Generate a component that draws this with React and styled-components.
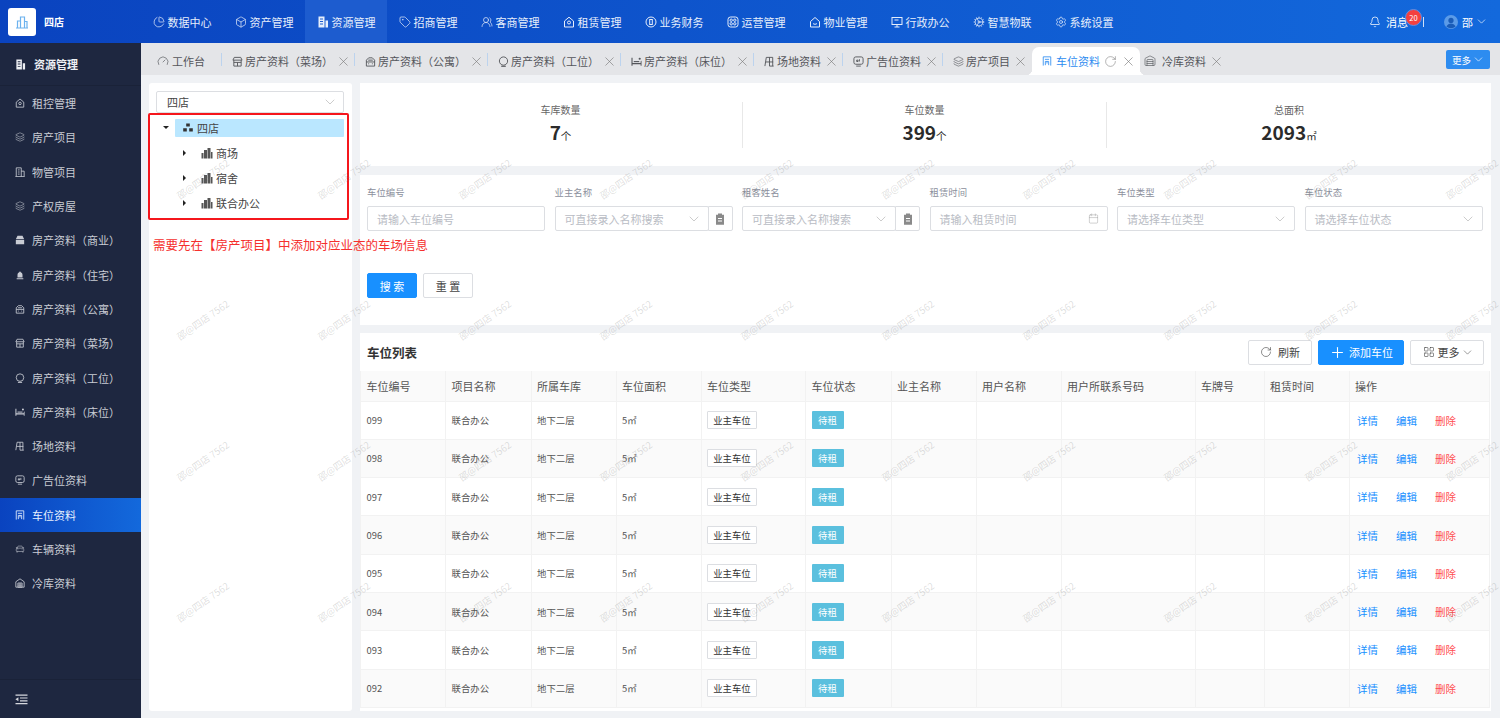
import React from 'react';
import styled, { createGlobalStyle, css } from 'styled-components';
import {
  Bell, Box, Calendar, CarFront, ChevronDown, Cog, Gauge, Layers, LayoutGrid, PieChart, Plus,
  RotateCw, Settings, Tag, UsersRound, Warehouse, X,
} from 'lucide-react';

const GlobalStyle = createGlobalStyle`
  html, body {
    margin: 0;
    height: 100%;
    overflow: hidden;
    font-family: "Noto Sans CJK SC", "Liberation Sans", sans-serif;
    background: #f0f2f5;
  }
  * { box-sizing: border-box; }
`;

const Page = styled.div`
  position: relative;
  display: flex;
  flex-direction: column;
  width: 1500px;
  height: 718px;
  overflow: hidden;
`;

/* top bar */
const TopBar = styled.header`
  display: flex;
  align-items: stretch;
  height: 43px;
  flex: none;
  color: #fff;
  background: linear-gradient(90deg, #0a43bf 0%, #1369dc 100%);
`;

const Brand = styled.div`
  display: flex;
  align-items: center;
  gap: 8px;
  width: 141px;
  padding-left: 8px;
  font-size: 10px;
  font-weight: 700;
`;

const LogoBox = styled.div`
  display: flex;
  align-items: center;
  justify-content: center;
  width: 28px;
  height: 28px;
  border-radius: 3px;
  background: #fff;
  color: #6cb2ee;
`;

const Nav = styled.nav`
  display: flex;
`;

const NavItem = styled.div`
  display: flex;
  align-items: center;
  justify-content: center;
  gap: 3px;
  width: 82px;
  font-size: 11px;
  color: #e6eefb;
  background: ${(p) => (p.$active ? '#1d5ccf' : 'transparent')};
`;

const TopRight = styled.div`
  display: flex;
  align-items: center;
  margin-left: auto;
  padding-right: 14px;
  font-size: 11px;
`;

const Message = styled.div`
  position: relative;
  display: flex;
  align-items: center;
  gap: 5px;
  padding-right: 15px;
  margin-right: 20px;
  border-right: 1px solid #cfe0f8;
  height: 10px;
`;

const Badge = styled.span`
  position: absolute;
  top: -8px;
  right: 1px;
  width: 17px;
  height: 17px;
  border-radius: 50%;
  background: #f4403f;
  border: 1px solid #5d8fe6;
  font-size: 7.5px;
  line-height: 15px;
  text-align: center;
  color: #fff;
`;

const User = styled.div`
  display: flex;
  align-items: center;
  gap: 4px;
`;

const Avatar = styled.svg`
  width: 14px;
  height: 14px;
`;

const SmallArrow = styled(ChevronDown)`
  flex: none;
  margin: 0 -2px;
`;

/* body */
const Body = styled.div`
  display: flex;
  flex: 1;
  min-height: 0;
`;

const Sidebar = styled.aside`
  display: flex;
  flex-direction: column;
  width: 141px;
  flex: none;
  background: #1e2740;
  color: #c9ccd4;
`;

const SideTitle = styled.div`
  display: flex;
  align-items: center;
  gap: 8px;
  height: 43px;
  padding-left: 15px;
  border-bottom: 1px solid #1a2238;
  font-size: 11px;
  font-weight: 700;
  color: #eef0f4;
`;

const SideMenu = styled.div`
  flex: 1;
`;

const SideItem = styled.div`
  display: flex;
  align-items: center;
  gap: 7px;
  height: 34.3px;
  padding-left: 15px;
  font-size: 11px;
  white-space: nowrap;
  color: ${(p) => (p.$active ? '#e8f0fd' : '#c9ccd4')};
  background: ${(p) => (p.$active ? 'linear-gradient(90deg, #0a43bf 0%, #1369dc 100%)' : 'transparent')};
`;

const SideFoot = styled.div`
  display: flex;
  align-items: center;
  height: 39px;
  padding-left: 15px;
  border-top: 1px solid #1a2238;
`;

const Main = styled.main`
  display: flex;
  flex-direction: column;
  flex: 1;
  min-width: 0;
`;

const TabBar = styled.div`
  position: relative;
  display: flex;
  align-items: flex-end;
  height: 32px;
  flex: none;
  background: #e4e5e8;
  font-size: 11px;
  color: #54565b;
`;

const tabPads = {
  first: '0 17px 0 16px',
  normal: '0 7px 0 10px',
  tight: '0 7px 0 4px',
};

const flare = css`
  content: '';
  position: absolute;
  bottom: 0;
  width: 6px;
  height: 6px;
`;

const Tab = styled.div`
  position: relative;
  display: flex;
  align-items: center;
  height: 28px;
  padding: ${(p) => tabPads[p.$pad || 'normal']};
  white-space: nowrap;
  color: ${(p) => (p.$active ? '#2d8cf0' : '#54565b')};
  background: ${(p) => (p.$active ? '#fff' : 'transparent')};
  border-radius: ${(p) => (p.$active ? '7px 7px 0 0' : '0')};
  ${(p) => p.$sep && css`
    &::after {
      content: '';
      position: absolute;
      right: 0;
      top: 6px;
      height: 13px;
      width: 1px;
      background: #bcd3ee;
    }
  `}
  ${(p) => p.$active && css`
    &::before {
      ${flare}
      left: -6px;
      background: radial-gradient(circle at 0 0, transparent 6px, #fff 6.5px);
    }
    &::after {
      ${flare}
      right: -6px;
      background: radial-gradient(circle at 100% 0, transparent 6px, #fff 6.5px);
    }
  `}
`;

const TabLabel = styled.span`
  margin: 0 ${(p) => p.$mr ?? 5}px 0 ${(p) => p.$ml ?? 2}px;
`;

/* lucide's X only fills half of its box, so the box is larger than its slot */
const CloseIcon = styled(X)`
  flex: none;
  margin: 0 -2.5px 0 ${(p) => (p.$ml || 0) - 2.5}px;
  color: #777;
`;

const ReloadIcon = styled(RotateCw)`
  flex: none;
  margin: 0 -1.5px;
  color: #777;
`;

const MoreTab = styled.div`
  position: absolute;
  top: 7px;
  right: 10px;
  display: flex;
  align-items: center;
  gap: 3px;
  height: 19px;
  width: 44px;
  padding-left: 6px;
  border-radius: 2px;
  background: #2d8cf0;
  color: #fff;
  font-size: 9.5px;
`;

const Content = styled.div`
  display: flex;
  flex: 1;
  min-height: 0;
  gap: 8px;
  padding: 8px 9px 7px 8px;
`;

const TreePanel = styled.section`
  width: 203px;
  flex: none;
  padding: 8px 8px 0 7px;
  background: #fff;
  border-radius: 3px;
`;

const ProjectSelect = styled.div`
  display: flex;
  align-items: center;
  justify-content: space-between;
  height: 22px;
  padding: 0 7px 0 10px;
  border: 1px solid #dcdee2;
  border-radius: 2px;
  font-size: 11px;
  color: #444;
`;

const FieldArrow = styled(ChevronDown)`
  flex: none;
  margin: 0 -2px;
  color: #aaa;
`;

const TreeBox = styled.div`
  margin: 0 -5px 0 -8px;
  height: 107px;
  padding: 0 3px 0 0;
  border: 2px solid #f5161c;
  border-radius: 2px;
`;

const TreeRow = styled.div`
  display: flex;
  align-items: center;
  height: 25px;
  padding-left: ${(p) => 13 + p.$level * 20}px;
  font-size: 11px;
  color: #444;
`;

const Caret = styled.span`
  width: 0;
  height: 0;
  margin-right: ${(p) => (p.$open ? '6px' : '15px')};
  border-style: solid;
  border-width: ${(p) => (p.$open ? '3px 3px 0 3px' : '3px 0 3px 3px')};
  border-color: ${(p) => (p.$open ? '#222 transparent transparent' : 'transparent transparent transparent #222')};
`;

const TreeLabel = styled.div`
  display: flex;
  align-items: center;
  gap: ${(p) => (p.$selected ? '4px' : '3px')};
  flex: ${(p) => (p.$selected ? 1 : 'none')};
  height: 18px;
  padding-left: ${(p) => (p.$selected ? '8px' : '0')};
  border-radius: 1px;
  background: ${(p) => (p.$selected ? '#bae7ff' : 'transparent')};
`;

const Notice = styled.p`
  position: relative;
  z-index: 1;
  margin: 16px 0 0 -3px;
  font-size: 12.5px;
  line-height: 18px;
  white-space: nowrap;
  color: #f5302e;
`;

const Right = styled.div`
  display: flex;
  flex-direction: column;
  flex: 1;
  min-width: 0;
  gap: 8px;
`;

const Panel = styled.section`
  background: #fff;
`;

const Stats = styled(Panel)`
  display: grid;
  grid-template-columns: repeat(3, 364px);
  height: 83px;
  padding: 19px 0 0 19px;
  margin-bottom: 1px;
`;

const Stat = styled.div`
  height: 46px;
  text-align: center;
  border-right: ${(p) => (p.$last ? 'none' : '1px solid #e8e8e8')};
`;

const StatLabel = styled.div`
  font-size: 10px;
  line-height: 16px;
  color: #666;
`;

const StatValue = styled.div`
  font-size: 19px;
  line-height: 28px;
  font-weight: 700;
  color: #2b2b2b;
  span {
    font-size: 10.5px;
    font-weight: 400;
  }
`;

const Filters = styled(Panel)`
  height: 150px;
  padding: 9px 9px 0 7px;
`;

const FilterGrid = styled.div`
  display: grid;
  grid-template-columns: repeat(6, 178px);
  column-gap: 9.5px;
`;

const FieldLabel = styled.div`
  height: 22px;
  font-size: 9.4px;
  line-height: 16px;
  color: #8b8f9c;
`;

const FieldRow = styled.div`
  display: flex;
  height: 25px;
`;

const Input = styled.div`
  display: flex;
  align-items: center;
  justify-content: space-between;
  flex: 1;
  min-width: 0;
  padding: 0 8px 0 9px;
  border: 1px solid #dcdee2;
  border-radius: 2px;
  font-size: 11px;
  white-space: nowrap;
  color: #b9bcc4;
`;

const PickButton = styled.div`
  display: flex;
  align-items: center;
  justify-content: center;
  width: 25px;
  margin-left: -1px;
  border: 1px solid #dcdee2;
  border-radius: 0 2px 2px 0;
`;

const FormActions = styled.div`
  display: flex;
  gap: 6px;
  margin-top: 42px;
`;

const Button = styled.div`
  display: flex;
  align-items: center;
  justify-content: center;
  gap: ${(p) => p.$gap ?? 6}px;
  width: ${(p) => p.$w}px;
  height: 25px;
  border-radius: 2px;
  font-size: 11px;
  border: 1px solid ${(p) => (p.$primary ? '#1890ff' : '#dcdee2')};
  background: ${(p) => (p.$primary ? '#1890ff' : '#fff')};
  color: ${(p) => (p.$primary ? '#fff' : '#444')};
`;

const ListPanel = styled(Panel)`
  flex: 1;
  min-height: 0;
  overflow: hidden;
`;

const ListHead = styled.div`
  display: flex;
  align-items: center;
  justify-content: space-between;
  height: 38px;
  padding: 0 7px;
`;

const ListTitle = styled.h2`
  margin: 0;
  font-size: 12.5px;
  font-weight: 700;
  color: #333;
`;

const ListActions = styled.div`
  display: flex;
  gap: 6px;
`;

const Table = styled.table`
  table-layout: fixed;
  width: 1129px;
  border-collapse: collapse;
  font-size: 9.4px;
  color: #555;
`;

const HeadCell = styled.th`
  height: 30px;
  padding: 0 5.5px;
  background: #fafafa;
  border: 1px solid #f2f2f2;
  border-top: none;
  border-bottom: none;
  font-size: 11px;
  font-weight: 400;
  text-align: left;
  white-space: nowrap;
  color: #555;
`;

const Row = styled.tr`
  height: 38.3px;
  background: ${(p) => (p.$striped ? '#fafafa' : '#fff')};
`;

const Cell = styled.td`
  padding: 0 5.5px;
  border: 1px solid #f2f2f2;
  white-space: nowrap;
`;

const TypeTag = styled.span`
  display: inline-block;
  width: 50px;
  height: 18px;
  border: 1px solid #dcdee2;
  border-radius: 1px;
  background: #fff;
  font-size: 9.4px;
  line-height: 16px;
  text-align: center;
  color: #333;
`;

const StatusTag = styled.span`
  display: inline-block;
  width: 32px;
  height: 18px;
  border-radius: 1px;
  background: #5bc0de;
  font-size: 9.4px;
  line-height: 18px;
  text-align: center;
  color: #fff;
`;

const OpLink = styled.span`
  margin: 0 16px 0 2px;
  font-size: 10.5px;
  color: ${(p) => (p.$danger ? '#ff4d4f' : '#1890ff')};
`;

/* watermark sheet lies over the page, text repeats every 141px */
const Watermarks = styled.div`
  position: absolute;
  left: 132px;
  top: 108px;
  display: grid;
  grid-template-columns: repeat(10, 141px);
  grid-auto-rows: 141px;
  pointer-events: none;
`;

const Mark = styled.div`
  display: flex;
  align-items: center;
  justify-content: center;
  font-size: 9.6px;
  white-space: nowrap;
  color: rgba(120, 120, 120, 0.24);
  transform: rotate(-35deg);
`;

/* drawings lucide has no close match for */
const GlyphSvg = styled.svg`
  flex: none;
`;

const Glyph = ({ size = 12, children, filled }) => (
  <GlyphSvg
    width={size}
    height={size}
    viewBox="0 0 12 12"
    fill={filled ? 'currentColor' : 'none'}
    stroke={filled ? 'none' : 'currentColor'}
    strokeWidth="1"
  >
    {children}
  </GlyphSvg>
);

const SolidBuilding = ({ size }) => (
  <Glyph size={size} filled>
    <path fillRule="evenodd" d="M1.5 .5h6v11h-6zM3 2.5v1h3v-1zM3 5v1h3V5zM3 7.5v1h3v-1zM8.5 4.5H11v7H8.5z" />
  </Glyph>
);
const OfficeIcon = ({ size }) => (
  <Glyph size={size}><path d="M1.5 11.5V1h6v10.5M7.500 5H11v6.500M.5 11.500h11M3.500 3.500h2M3.500 6h2M3.500 8.500h2" /></Glyph>
);
const MallIcon = ({ size }) => (
  <Glyph size={size} filled><path d="M3 1h6l2 4H1zM1 6h10v5H1z" /></Glyph>
);
const HouseIcon = ({ size }) => (
  <Glyph size={size} filled><path d="M6 1.500l1.200 1.400c1 .4 1.800 1.300 1.800 3.100v3H3V6c0-1.800.8-2.700 1.800-3.100zM2 9.800h8V11H2z" /></Glyph>
);
const FlatIcon = ({ size }) => (
  <Glyph size={size}><path d="M1.500 11V4.500L4 2h4l2.500 2.500V11zM1.500 6.500h9M3.500 8.500h1M7.500 8.500h1M3.500 4.500h5" /></Glyph>
);
const MarketIcon = ({ size }) => (
  <Glyph size={size}><path d="M2.500 1.500h7l1.500 3h-10zM2 4.500V11h8V4.500M2 7h8M6 7v4" /></Glyph>
);
const DeskIcon = ({ size }) => (
  <Glyph size={size}><circle cx="6" cy="5.500" r="4.500" /><path d="M3.500 11.200h5" strokeWidth="1.200" /></Glyph>
);
const BedIcon = ({ size }) => (
  <Glyph size={size} filled>
    <path d="M.5 2h1.200v5.500h8.800V6.200c0-.6.4-.9 1-.9V10.500h-1V9H1.700v1.500H.5z" />
    <path d="M3 5.500h6v1.200H3z" /><circle cx="9.500" cy="3" r="1.200" />
  </Glyph>
);
const VenueIcon = ({ size }) => (
  <Glyph size={size}><path d="M1 11l1.500-9.500h7v9.500M2 6.500h8M6 1.500V11M6 11h4.500" /></Glyph>
);
const AdIcon = ({ size }) => (
  <Glyph size={size}>
    <rect x="1" y="1" width="10" height="8" rx="2" /><path d="M3.500 11h5" /><path d="M4 4.500h1.500v1.500H4zM7 3.500v2.500" />
  </Glyph>
);
const ParkIcon = ({ size }) => (
  <Glyph size={size}><path d="M1.500 11.500V1h9v10.500M3.500 4h5M4 11V6.500h4V11M6 6.500V9" /></Glyph>
);
const ColdIcon = ({ size }) => (
  <Glyph size={size}><path d="M6 1L1 4.500V11h10V4.500zM3.500 6h5v5h-5zM3.500 8.500h5M6 6v5" /></Glyph>
);
const CoinIcon = ({ size }) => (
  <Glyph size={size}><circle cx="6" cy="6" r="5" /><rect x="4.700" y="3.500" width="2.600" height="5" /></Glyph>
);
const OpsIcon = ({ size }) => (
  <Glyph size={size}>
    <rect x="1" y="1" width="10" height="10" rx="2.500" />
    <circle cx="4.200" cy="4.200" r="1.200" /><circle cx="7.800" cy="4.200" r="1.200" />
    <circle cx="4.200" cy="7.800" r="1.200" /><circle cx="7.800" cy="7.800" r="1.200" />
  </Glyph>
);
const PropertyIcon = ({ size }) => (
  <Glyph size={size}><path d="M1.500 5.500L6 1.500l4.500 4v5.500h-9zM4 7.500c1 1 3 1 4 0" /></Glyph>
);
const ScreenIcon = ({ size }) => (
  <Glyph size={size}><rect x="1" y="1.500" width="10" height="7" /><path d="M6 8.500v2.500M3.500 11h5M3.500 4h4" /></Glyph>
);
const RentIcon = ({ size }) => (
  <Glyph size={size}><path d="M1.500 5L6 1.200 10.500 5v6h-9z" /><circle cx="6" cy="6.500" r="1.500" /></Glyph>
);
const CityIcon = () => (
  <svg width="12" height="12" viewBox="0 0 12 12" fill="#555">
    <path d="M0.500 6h2v5.500h-2zM3 3h3v8.500H3zM6.500 1h3v10.500h-3zM10 5h1.500v6.500H10z" />
  </svg>
);
const OrgIcon = () => (
  <svg width="10" height="9" viewBox="0 0 10 9" fill="#333">
    <path d="M3.200 0.500h3.600v3H3.200zM0.200 5.200h3.600v3.300H0.200zM6.200 5.200h3.600v3.300H6.200z" />
  </svg>
);
const ClipIcon = () => (
  <svg width="10" height="12" viewBox="0 0 10 12" fill="#8a8a8a">
    <path d="M3 0.500h4v1.200h2v10H1v-10h2z" />
    <path d="M3 5h4v1H3zM3 7.500h4v1H3z" fill="#fff" />
  </svg>
);
const OutdentIcon = () => (
  <svg width="13" height="11" viewBox="0 0 13 11" fill="#d5d7dd">
    <path d="M0.500 0.500h12v1.200H.5zM5 3.400h7.500v1.200H5zM5 6.200h7.500v1.200H5zM0.500 9.100h12v1.200H.5zM3.400 3.300v4l-3-2z" />
  </svg>
);
const LogoIcon = () => (
  <svg width="14" height="14" viewBox="0 0 14 14" fill="none" stroke="currentColor" strokeWidth="1.200">
    <path d="M1 13h12M2.500 13V6h3v7M5.500 13V2h4v11M9.500 13V6.500h2.500V13" />
  </svg>
);

const navItems = [
  ['数据中心', PieChart], ['资产管理', Box], ['资源管理', SolidBuilding], ['招商管理', Tag],
  ['客商管理', UsersRound], ['租赁管理', RentIcon], ['业务财务', CoinIcon], ['运营管理', OpsIcon],
  ['物业管理', PropertyIcon], ['行政办公', ScreenIcon], ['智慧物联', Cog], ['系统设置', Settings],
];

const sideItems = [
  ['租控管理', RentIcon], ['房产项目', Layers], ['物管项目', OfficeIcon], ['产权房屋', Layers],
  ['房产资料（商业）', MallIcon], ['房产资料（住宅）', HouseIcon], ['房产资料（公寓）', FlatIcon], ['房产资料（菜场）', MarketIcon],
  ['房产资料（工位）', DeskIcon], ['房产资料（床位）', BedIcon], ['场地资料', VenueIcon], ['广告位资料', AdIcon],
  ['车位资料', ParkIcon], ['车辆资料', CarFront], ['冷库资料', ColdIcon],
];

const tabs = [
  ['房产资料（菜场）', MarketIcon], ['房产资料（公寓）', FlatIcon], ['房产资料（工位）', DeskIcon], ['房产资料（床位）', BedIcon],
  ['场地资料', VenueIcon], ['广告位资料', AdIcon], ['房产项目', Layers],
];

const stats = [
  ['车库数量', '7', '个'],
  ['车位数量', '399', '个'],
  ['总面积', '2093', '㎡'],
];

const fields = [
  { label: '车位编号', holder: '请输入车位编号' },
  { label: '业主名称', holder: '可直接录入名称搜索', icon: 'chevron', pick: true },
  { label: '租客姓名', holder: '可直接录入名称搜索', icon: 'chevron', pick: true },
  { label: '租赁时间', holder: '请输入租赁时间', icon: 'calendar' },
  { label: '车位类型', holder: '请选择车位类型', icon: 'chevron' },
  { label: '车位状态', holder: '请选择车位状态', icon: 'chevron' },
];

const columns = [
  ['车位编号', 85], ['项目名称', 85.5], ['所属车库', 85], ['车位面积', 85], ['车位类型', 104.5], ['车位状态', 85.5],
  ['业主名称', 85], ['用户名称', 85], ['用户所联系号码', 134], ['车牌号', 69], ['租赁时间', 85], ['操作', 140.5],
];

const rows = ['099', '098', '097', '096', '095', '094', '093', '092'];

const treeNodes = ['商场', '宿舍', '联合办公'];

const App = () => (
  <Page>
    <GlobalStyle />
    <TopBar>
      <Brand>
        <LogoBox><LogoIcon /></LogoBox>
        四店
      </Brand>
      <Nav>
        {navItems.map(([name, Icon]) => (
          <NavItem key={name} $active={name === '资源管理'}>
            <Icon size={12} strokeWidth={1.4} />
            {name}
          </NavItem>
        ))}
      </Nav>
      <TopRight>
        <Message>
          <Bell size={12} strokeWidth={1.5} />
          消息
          <Badge>20</Badge>
        </Message>
        <User>
          <Avatar viewBox="0 0 14 14">
            <circle cx="7" cy="7" r="7" fill="#5b9be8" />
            <circle cx="7" cy="5.400" r="2.600" fill="#1a5cb8" />
            <path d="M2.400 11.600c1-2.400 2.800-3.200 4.600-3.200s3.600.8 4.600 3.200A7 7 0 0 1 2.400 11.600z" fill="#1a5cb8" />
          </Avatar>
          邵
          <SmallArrow size={13} strokeWidth={1.2} />
        </User>
      </TopRight>
    </TopBar>
    <Body>
      <Sidebar>
        <SideTitle>
          <SolidBuilding size={11} />
          资源管理
        </SideTitle>
        <SideMenu>
          {sideItems.map(([name, Icon]) => (
            <SideItem key={name} $active={name === '车位资料'}>
              <Icon size={10} strokeWidth={1.3} />
              {name}
            </SideItem>
          ))}
        </SideMenu>
        <SideFoot><OutdentIcon /></SideFoot>
      </Sidebar>
      <Main>
        <TabBar>
          <Tab $pad="first" $sep>
            <Gauge size={12} strokeWidth={1.3} />
            <TabLabel $ml={3} $mr={0}>工作台</TabLabel>
          </Tab>
          {tabs.map(([name, Icon], i) => (
            <Tab key={name} $sep={i < tabs.length - 1}>
              <Icon size={11} strokeWidth={1.3} />
              <TabLabel>{name}</TabLabel>
              <CloseIcon size={15} strokeWidth={1} />
            </Tab>
          ))}
          <Tab $active>
            <ParkIcon size={10} />
            <TabLabel $ml={4}>车位资料</TabLabel>
            <ReloadIcon size={13} strokeWidth={1} />
            <CloseIcon size={15} strokeWidth={1} $ml={8} />
          </Tab>
          <Tab $pad="tight">
            <Warehouse size={12} strokeWidth={1.3} />
            <TabLabel $ml={6}>冷库资料</TabLabel>
            <CloseIcon size={15} strokeWidth={1} />
          </Tab>
          <MoreTab>更多<SmallArrow size={13} strokeWidth={1.2} /></MoreTab>
        </TabBar>
        <Content>
          <TreePanel>
            <ProjectSelect>四店<FieldArrow size={16} strokeWidth={0.9} /></ProjectSelect>
            <TreeBox>
              <TreeRow $level={0}>
                <Caret $open />
                <TreeLabel $selected><OrgIcon />四店</TreeLabel>
              </TreeRow>
              {treeNodes.map((name) => (
                <TreeRow key={name} $level={1}>
                  <Caret />
                  <TreeLabel><CityIcon />{name}</TreeLabel>
                </TreeRow>
              ))}
            </TreeBox>
            <Notice>需要先在【房产项目】中添加对应业态的车场信息</Notice>
          </TreePanel>
          <Right>
            <Stats>
              {stats.map(([label, value, unit], i) => (
                <Stat key={label} $last={i === 2}>
                  <StatLabel>{label}</StatLabel>
                  <StatValue>{value}<span>{unit}</span></StatValue>
                </Stat>
              ))}
            </Stats>
            <Filters>
              <FilterGrid>
                {fields.map((f) => (
                  <div key={f.label}>
                    <FieldLabel>{f.label}</FieldLabel>
                    <FieldRow>
                      <Input>
                        {f.holder}
                        {f.icon === 'chevron' && <FieldArrow size={16} strokeWidth={0.9} />}
                        {f.icon === 'calendar' && <Calendar size={11} strokeWidth={1} color="#999" />}
                      </Input>
                      {f.pick && <PickButton><ClipIcon /></PickButton>}
                    </FieldRow>
                  </div>
                ))}
              </FilterGrid>
              <FormActions>
                <Button $primary $w={50}>搜 索</Button>
                <Button $w={50}>重 置</Button>
              </FormActions>
            </Filters>
            <ListPanel>
              <ListHead>
                <ListTitle>车位列表</ListTitle>
                <ListActions>
                  <Button $w={64}><RotateCw size={12} strokeWidth={1.2} />刷新</Button>
                  <Button $primary $w={86} $gap={3}><Plus size={17} strokeWidth={1.5} />添加车位</Button>
                  <Button $w={74} $gap={3}><LayoutGrid size={12} strokeWidth={1.2} />更多<SmallArrow size={13} strokeWidth={1} /></Button>
                </ListActions>
              </ListHead>
              <Table>
                <colgroup>
                  {columns.map(([name, w]) => <col key={name} width={w} />)}
                </colgroup>
                <thead>
                  <tr>
                    {columns.map(([name]) => <HeadCell key={name}>{name}</HeadCell>)}
                  </tr>
                </thead>
                <tbody>
                  {rows.map((no, i) => (
                    <Row key={no} $striped={i % 2 === 1}>
                      <Cell>{no}</Cell>
                      <Cell>联合办公</Cell>
                      <Cell>地下二层</Cell>
                      <Cell>5㎡</Cell>
                      <Cell><TypeTag>业主车位</TypeTag></Cell>
                      <Cell><StatusTag>待租</StatusTag></Cell>
                      <Cell />
                      <Cell />
                      <Cell />
                      <Cell />
                      <Cell />
                      <Cell>
                        <OpLink>详情</OpLink>
                        <OpLink>编辑</OpLink>
                        <OpLink $danger>删除</OpLink>
                      </Cell>
                    </Row>
                  ))}
                </tbody>
              </Table>
            </ListPanel>
          </Right>
        </Content>
      </Main>
    </Body>
    <Watermarks>
      {Array.from({ length: 40 }, (_, i) => <Mark key={i}>邵@四店 7562</Mark>)}
    </Watermarks>
  </Page>
);

export default App;
